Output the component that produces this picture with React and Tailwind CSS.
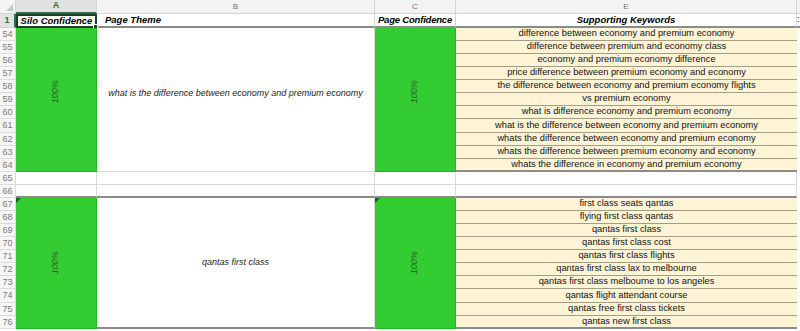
import React from "react";

const block1 = [
  "difference between economy and premium economy",
  "difference between premium and economy class",
  "economy and premium economy difference",
  "price difference between premium economy and economy",
  "the difference between economy and premium economy flights",
  "vs premium economy",
  "what is difference economy and premium economy",
  "what is the difference between economy and premium economy",
  "whats the difference between economy and premium economy",
  "whats the difference between premium economy and economy",
  "whats the difference in economy and premium economy",
];
const block2 = [
  "first class seats qantas",
  "flying first class qantas",
  "qantas first class",
  "qantas first class cost",
  "qantas first class flights",
  "qantas first class lax to melbourne",
  "qantas first class melbourne to los angeles",
  "qantas flight attendant course",
  "qantas free first class tickets",
  "qantas new first class",
];

// rows 61 and 74 are one pixel taller, as in the sheet
const tallRows = [61, 74];
const rowNums = Array.from({ length: 23 }, (_, i) => 54 + i);

function ColHead({ label }) {
  return (
    <div className="flex h-[14px] items-center justify-center border-b border-r border-[#d4d4d4] bg-[#f3f3f3] text-[8px] text-[#6e6e6e]">
      {label}
    </div>
  );
}

function Green({ tall, triangle }) {
  return (
    <div
      className={`relative flex items-center justify-center border-b border-r border-[#20b820] bg-[#33cc33] ${tall ? "h-[144px] pb-[16px]" : "h-[131px]"}`}
    >
      {triangle && (
        <div className="absolute left-0 top-0 h-0 w-0 border-r-[5px] border-t-[5px] border-r-transparent border-t-[#1e5e1e]" />
      )}
      <span className="-rotate-90 whitespace-nowrap text-[9px] italic text-[#2d552d]">100%</span>
    </div>
  );
}

function EmptyRows() {
  return (
    <>
      <div className="h-[13px] border-b border-r border-[#d9d9d9] bg-white" />
      <div className="h-[13px] border-b-2 border-r border-b-[#8a8a8a] border-r-[#d9d9d9] bg-white" />
    </>
  );
}

function Keywords({ items, start }) {
  return (
    <div className="flex flex-col">
      {items.map((k, i) => (
        <div
          key={k}
          className={`flex items-center justify-center bg-[#fff4d6] text-[9.3px] leading-none text-[#111] ${
            tallRows.includes(start + i) ? "h-[14px]" : "h-[13px]"
          } ${i === items.length - 1 ? "border-b-2 border-b-[#8a8a8a]" : "border-b border-b-[#a29e86]"}`}
        >
          {k}
        </div>
      ))}
    </div>
  );
}

export default function App() {
  return (
    <div className="flex h-[331px] w-[800px] overflow-hidden bg-white font-['Liberation_Sans',Arial,sans-serif]">
      {/* row numbers */}
      <div className="flex w-[16px] shrink-0 flex-col">
        <div className="relative h-[14px] border-b border-r border-[#d4d4d4] bg-[#f3f3f3]">
          <div className="absolute bottom-[2px] right-[2px] h-0 w-0 border-b-[7px] border-l-[7px] border-b-[#c8c8c8] border-l-transparent" />
        </div>
        <div className="flex h-[14px] items-center justify-center border-b border-r-2 border-b-[#d4d4d4] border-r-[#217346] bg-[#e2e2e2] text-[9px] font-bold text-[#217346]">
          1
        </div>
        {rowNums.map((n) => (
          <div
            key={n}
            className={`flex items-center justify-center border-b border-r border-[#dcdcdc] bg-[#f6f6f6] text-[9px] leading-none text-[#7a7a7a] ${
              tallRows.includes(n) ? "h-[14px]" : "h-[13px]"
            }`}
          >
            {n}
          </div>
        ))}
      </div>

      {/* column A */}
      <div className="flex w-[81px] shrink-0 flex-col">
        <div className="flex h-[14px] items-center justify-center border-b-2 border-r border-b-[#217346] border-r-[#d4d4d4] bg-[#e2e2e2] text-[9px] font-bold text-[#217346]">
          A
        </div>
        <div className="relative flex h-[14px] items-center justify-center whitespace-nowrap border-2 border-[#1f3d28] bg-white text-[9.5px] font-bold italic text-black">
          Silo Confidence
          <div className="absolute -bottom-[3px] -right-[3px] h-[5px] w-[5px] border border-white bg-[#1f3d28]" />
        </div>
        <Green tall />
        <EmptyRows />
        <Green triangle />
      </div>

      {/* column B */}
      <div className="flex w-[278px] shrink-0 flex-col">
        <ColHead label="B" />
        <div className="flex h-[14px] items-center whitespace-nowrap border-b-2 border-r border-b-[#8a8a8a] border-r-[#d4d4d4] pl-[8px] text-[9.5px] font-bold italic text-black">
          Page Theme
        </div>
        <div className="flex h-[144px] items-center justify-center border-b border-r border-[#d9d9d9] bg-white pb-[12px] text-[9px] italic text-[#222]">
          what is the difference between economy and premium economy
        </div>
        <EmptyRows />
        <div className="flex h-[131px] items-center justify-center border-b-2 border-r border-b-[#8a8a8a] border-r-[#d9d9d9] bg-white text-[9px] italic text-[#222]">
          qantas first class
        </div>
      </div>

      {/* column C */}
      <div className="flex w-[81px] shrink-0 flex-col">
        <ColHead label="C" />
        <div className="flex h-[14px] items-center justify-center whitespace-nowrap border-b-2 border-r border-b-[#8a8a8a] border-r-[#d4d4d4] text-[9.5px] font-bold italic tracking-[-0.2px] text-black">
          Page Confidence
        </div>
        <Green tall />
        <EmptyRows />
        <Green triangle />
      </div>

      {/* column E */}
      <div className="flex w-[341px] shrink-0 flex-col">
        <ColHead label="E" />
        <div className="flex h-[14px] items-center justify-center whitespace-nowrap border-b-2 border-r border-b-[#8a8a8a] border-r-[#d4d4d4] text-[9.5px] font-bold italic text-black">
          Supporting Keywords
        </div>
        <Keywords items={block1} start={54} />
        <EmptyRows />
        <Keywords items={block2} start={67} />
      </div>

      {/* column F sliver */}
      <div className="flex w-[3px] shrink-0 flex-col">
        <div className="h-[14px] border-b border-[#d4d4d4] bg-[#f3f3f3]" />
        <div className="flex h-[14px] items-center border-b-2 border-b-[#8a8a8a] text-[9px] text-black">:</div>
      </div>
    </div>
  );
}
